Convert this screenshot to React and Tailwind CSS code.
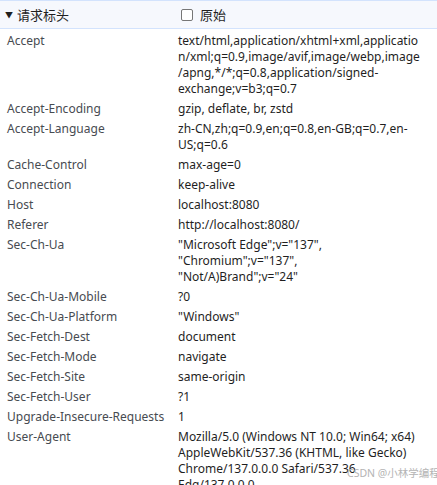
import React from "react";

const rows = [
  ["Accept", ["text/html,application/xhtml+xml,applicatio", "n/xml;q=0.9,image/avif,image/webp,image", "/apng,*/*;q=0.8,application/signed-", "exchange;v=b3;q=0.7"]],
  ["Accept-Encoding", ["gzip, deflate, br, zstd"]],
  ["Accept-Language", ["zh-CN,zh;q=0.9,en;q=0.8,en-GB;q=0.7,en-", "US;q=0.6"]],
  ["Cache-Control", ["max-age=0"]],
  ["Connection", ["keep-alive"]],
  ["Host", ["localhost:8080"]],
  ["Referer", ["http://localhost:8080/"]],
  ["Sec-Ch-Ua", ['"Microsoft Edge";v="137",', '"Chromium";v="137",', '"Not/A)Brand";v="24"']],
  ["Sec-Ch-Ua-Mobile", ["?0"]],
  ["Sec-Ch-Ua-Platform", ['"Windows"']],
  ["Sec-Fetch-Dest", ["document"]],
  ["Sec-Fetch-Mode", ["navigate"]],
  ["Sec-Fetch-Site", ["same-origin"]],
  ["Sec-Fetch-User", ["?1"]],
  ["Upgrade-Insecure-Requests", ["1"]],
  ["User-Agent", ["Mozilla/5.0 (Windows NT 10.0; Win64; x64)", "AppleWebKit/537.36 (KHTML, like Gecko)", "Chrome/137.0.0.0 Safari/537.36", "Edg/137.0.0.0"]],
];

export default function App() {
  return (
    <div className="relative w-[437px] h-[485px] overflow-hidden bg-white font-['Noto_Sans','Noto_Sans_CJK_SC',sans-serif] text-[12px] leading-[16px]">
      <div className="flex h-[29px] items-center border-y border-[#d3e3fd] bg-[#f6f8fd] text-[#1f1f1f]">
        <div className="flex w-[178px] items-center pl-[5px]">
          <span className="text-[8px] leading-none mr-[4px]">▼</span>
          <span className="text-[13px]">请求标头</span>
        </div>
        <div className="flex items-center pl-[3px]">
          <span className="inline-block w-[12px] h-[12px] rounded-[2px] border border-[#767676] bg-white mr-[7px]"></span>
          <span className="text-[13px]">原始</span>
        </div>
      </div>
      <div className="pt-[2px]">
        {rows.map(([k, v]) => (
          <div key={k} className="grid grid-cols-[178px_1fr] py-[2px]">
            <div className="pl-[7px] text-[#474b51] whitespace-nowrap">{k}</div>
            <div className="text-[#1f1f1f] whitespace-nowrap">
              {v.map((l, i) => (
                <div key={i}>{l}</div>
              ))}
            </div>
          </div>
        ))}
      </div>
      <div className="absolute left-[347px] top-[466px] text-[10.5px] leading-[14px] text-[#b4b4b4] whitespace-nowrap">
        CSDN @小林学编程
      </div>
    </div>
  );
}
